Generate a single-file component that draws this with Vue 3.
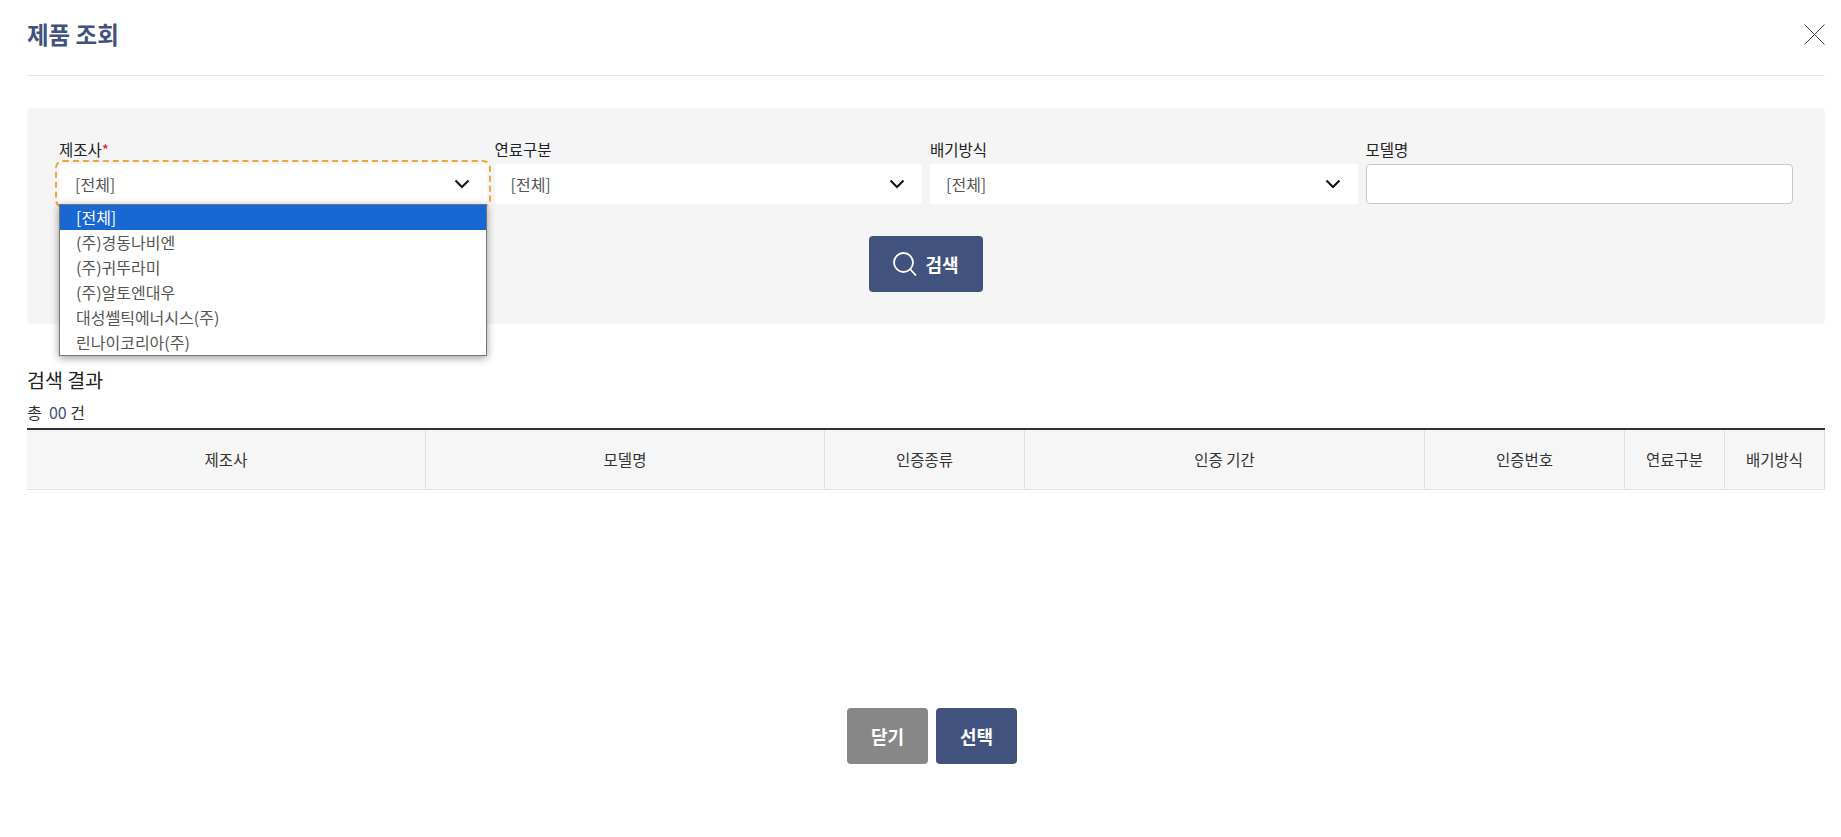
<script setup>
const fields = [
  { label: '제조사', required: true, active: true },
  { label: '연료구분' },
  { label: '배기방식' },
]
const options = ['[전체]', '(주)경동나비엔', '(주)귀뚜라미', '(주)알토엔대우', '대성쎌틱에너시스(주)', '린나이코리아(주)']
const columns = ['제조사', '모델명', '인증종류', '인증 기간', '인증번호', '연료구분', '배기방식']
</script>

<template>
  <div class="page">
    <header class="head">
      <h1 class="title">제품 조회</h1>
      <svg class="close" width="21" height="21" viewBox="0 0 21 21" aria-label="닫기">
        <path d="M0.5 0.5 L20.5 20.5 M20.5 0.5 L0.5 20.5" stroke="#444" stroke-width="1" fill="none" />
      </svg>
    </header>

    <section class="panel">
      <div class="fields">
        <div v-for="f in fields" :key="f.label" class="field">
          <label class="label">{{ f.label }}<span v-if="f.required" class="req">*</span></label>
          <div class="select" :class="{ active: f.active }">
            <span class="value">[전체]</span>
            <svg class="chev" width="16" height="10" viewBox="0 0 16 10">
              <path d="M1.5 1.5 L8 8 L14.5 1.5" stroke="#111" stroke-width="2" fill="none" />
            </svg>
            <ul v-if="f.active" class="menu">
              <li v-for="(o, i) in options" :key="o" class="opt" :class="{ sel: i === 0 }">{{ o }}</li>
            </ul>
          </div>
        </div>
        <div class="field">
          <label class="label">모델명</label>
          <input class="input" type="text" />
        </div>
      </div>
      <div class="search-row">
        <button class="btn search">
          <svg width="24" height="24" viewBox="0 0 24 24">
            <circle cx="10.5" cy="10.5" r="9.5" stroke="#fff" stroke-width="1.8" fill="none" />
            <path d="M17.5 17.5 L23 23.5" stroke="#fff" stroke-width="1.8" fill="none" />
          </svg>
          <span>검색</span>
        </button>
      </div>
    </section>

    <h2 class="result-title">검색 결과</h2>
    <p class="count">총 &nbsp;<em>00</em> 건</p>

    <div class="table-head">
      <div v-for="c in columns" :key="c" class="th">{{ c }}</div>
    </div>

    <footer class="foot">
      <button class="btn gray">닫기</button>
      <button class="btn navy">선택</button>
    </footer>
  </div>
</template>

<style>
html, body { margin: 0; background: #fff; }
</style>

<style scoped>
.page {
  box-sizing: border-box;
  height: 837px;
  overflow: hidden;
  padding: 0 16px 0 27px;
  font-family: "Noto Sans CJK KR", "Noto Sans", sans-serif;
  color: #222;
}
.head {
  height: 76px;
  box-sizing: border-box;
  border-bottom: 1px solid #e8e8e8;
  display: flex;
  justify-content: space-between;
  align-items: flex-start;
}
.title {
  margin: 17px 0 0;
  font-size: 23.5px;
  line-height: 34px;
  font-weight: 700;
  color: #42527f;
}
.close { margin-top: 24px; }
.panel {
  margin-top: 32px;
  height: 216px;
  box-sizing: border-box;
  background: #f5f5f5;
  border-radius: 4px;
  padding: 30px 32px 0;
}
.fields {
  display: grid;
  grid-template-columns: repeat(4, 1fr);
  column-gap: 8px;
}
.field { min-width: 0; }
.label {
  display: block;
  height: 26px;
  font-size: 15.5px;
  line-height: 22px;
  color: #222;
}
.req { color: #d8213b; }
.select {
  position: relative;
  height: 40px;
  box-sizing: border-box;
  background: #fff;
  border-radius: 4px;
  display: flex;
  align-items: center;
  justify-content: space-between;
  padding: 0 17px 0 16px;
}
.select.active {
  outline: 2px dashed #f0a63a;
  outline-offset: 2px;
}
.value {
  font-size: 16px;
  color: #555;
}
.chev { margin-top: -1px; }
.menu {
  position: absolute;
  z-index: 5;
  left: 0;
  right: 0;
  top: 40px;
  margin: 0;
  padding: 0;
  list-style: none;
  background: #fff;
  border: 1px solid #767676;
  box-shadow: 0 2px 8px rgba(0, 0, 0, 0.4);
}
.opt {
  height: 25px;
  line-height: 25px;
  padding-left: 16px;
  font-size: 16px;
  color: #555;
}
.opt.sel {
  background: #1967d2;
  color: #fff;
}
.input {
  display: block;
  width: 100%;
  height: 40px;
  box-sizing: border-box;
  background: #fff;
  border: 1px solid #c8c8c8;
  border-radius: 4px;
}
.search-row {
  display: flex;
  justify-content: center;
  margin-top: 32px;
}
.btn {
  border: 0;
  border-radius: 4px;
  font-family: inherit;
  color: #fff;
  font-weight: 700;
  font-size: 18px;
  height: 56px;
  padding: 0;
  display: flex;
  align-items: center;
  justify-content: center;
}
.search {
  width: 114px;
  background: #42527f;
  gap: 8px;
}
.result-title {
  margin: 41px 0 0;
  font-size: 19.5px;
  line-height: 30px;
  font-weight: 400;
  color: #222;
}
.count {
  margin: 6px 0 0;
  font-size: 16px;
  line-height: 22px;
  color: #333;
}
.count em {
  font-style: normal;
  color: #42527f;
}
.table-head {
  margin-top: 5px;
  display: grid;
  grid-template-columns: 399fr 399fr 200fr 400fr 200fr 100fr 100fr;
  border-top: 2px solid #333;
  border-bottom: 1px solid #e0e0e0;
  background: #f6f6f6;
}
.th {
  height: 59px;
  line-height: 59px;
  text-align: center;
  font-size: 15.5px;
  color: #333;
  border-right: 1px solid #e0e0e0;
}
.foot {
  margin-top: 218px;
  padding-left: 12px;
  display: flex;
  justify-content: center;
  gap: 8px;
}
.gray { width: 81px; background: #878787; }
.navy { width: 81px; background: #42527f; }
</style>
